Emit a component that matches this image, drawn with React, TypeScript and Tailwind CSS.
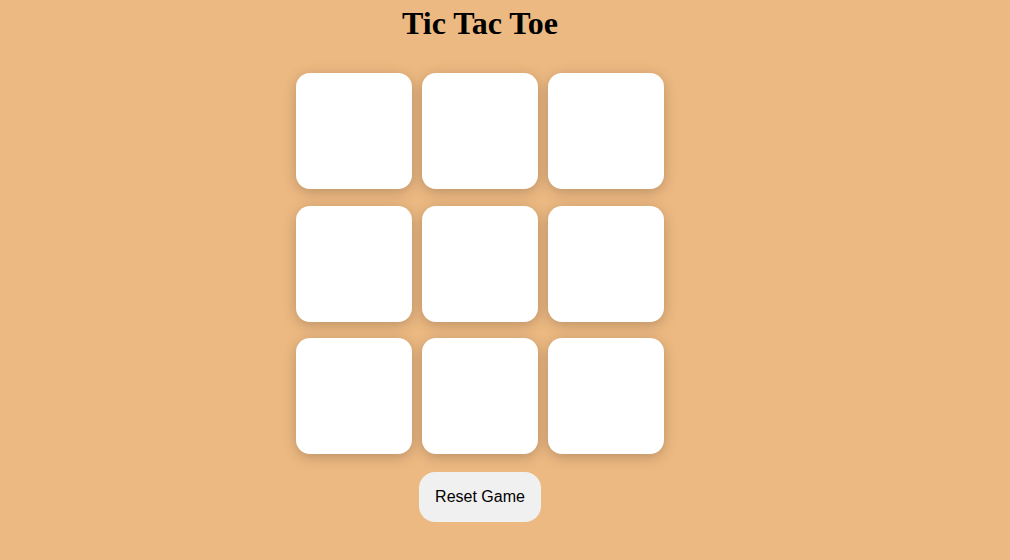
import React, { useState } from 'react';

const App: React.FC = () => {
  const [board, setBoard] = useState<(string | null)[]>(Array(9).fill(null));
  const [xNext, setXNext] = useState(true);

  const play = (i: number) => {
    if (board[i]) return;
    const next = board.slice();
    next[i] = xNext ? 'X' : 'O';
    setBoard(next);
    setXNext(!xNext);
  };

  const rows = [0, 1, 2];

  return (
    <div className="min-h-screen w-full bg-[#edb982]">
      <div className="w-[960px] flex flex-col items-center">
        <h1 className="mt-[5px] text-[32px] leading-[36px] font-bold text-black font-['Liberation_Serif',serif]">
          Tic Tac Toe
        </h1>

        {/* Board */}
        <div className="mt-[32px] flex flex-col gap-[16.5px]">
          {rows.map(r => (
            <div key={r} className="flex gap-[10px]">
              {[0, 1, 2].map(c => {
                const i = r * 3 + c;
                return (
                  <button
                    key={i}
                    onClick={() => play(i)}
                    className="w-[116px] h-[116px] bg-white rounded-[14px] shadow-[0_3px_14px_rgba(0,0,0,0.22)] text-5xl font-bold font-['Liberation_Sans',sans-serif]"
                  >
                    {board[i]}
                  </button>
                );
              })}
            </div>
          ))}
        </div>

        <button
          onClick={() => {
            setBoard(Array(9).fill(null));
            setXNext(true);
          }}
          className="mt-[18px] w-[122px] h-[50px] bg-[#f0f0f0] rounded-[16px] text-[16px] text-black font-['Liberation_Sans',sans-serif]"
        >
          Reset Game
        </button>
      </div>
    </div>
  );
};

export default App;
